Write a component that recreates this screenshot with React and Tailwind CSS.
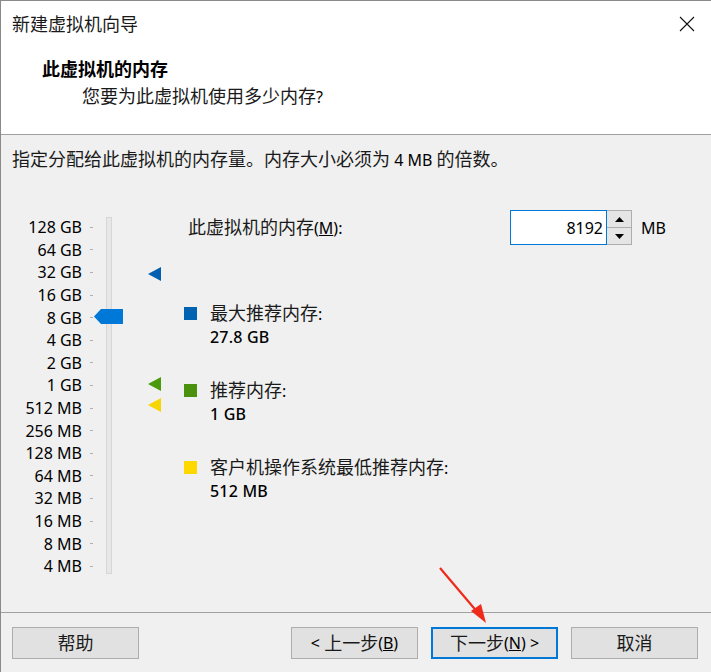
import React from 'react';

const font = { fontFamily: '"Noto Sans", "Noto Sans CJK SC", sans-serif' };

// CJK text runs a little wider than the latin text beside it
const C = ({ children, bold }) => (
  <span className={`text-[18px] text-[#1a1a1a] ${bold ? 'font-bold text-black' : ''}`}>{children}</span>
);

const scaleLabels = [
  '128 GB', '64 GB', '32 GB', '16 GB', '8 GB', '4 GB', '2 GB', '1 GB',
  '512 MB', '256 MB', '128 MB', '64 MB', '32 MB', '16 MB', '8 MB', '4 MB',
];

const Marker = ({ top, color }) => (
  <svg className="absolute left-[146px]" style={{ top }} width="15" height="15" viewBox="0 0 15 15">
    <polygon points="14,0 14,14 1,7" fill={color} />
  </svg>
);

const Legend = ({ color, label, value }) => (
  <div className="flex flex-col">
    <div className="flex items-center h-6 leading-6">
      <div className={`w-[13px] h-[13px] ${color}`} />
      <span className="ml-[13px]"><C>{label}</C>:</span>
    </div>
    <div className="h-6 leading-6 ml-[26px] font-medium tracking-[0.2px]">{value}</div>
  </div>
);

const Btn = ({ children, primary }) => (
  <button
    className={`w-[127px] h-[32px] bg-[#e1e1e1] text-[16px] leading-none text-black flex items-center justify-center ${
      primary ? 'border-2 border-[#0078d7]' : 'border border-[#adadad]'
    }`}
  >
    {children}
  </button>
);

export default function App() {
  return (
    <div className="relative w-[711px] h-[672px] bg-[#f0f0f0] border-l border-t border-[#8a8a8a] text-black text-[16px] overflow-hidden" style={font}>
      {/* title bar */}
      <div className="h-[46px] bg-white flex items-center justify-between pl-[11px] pr-[16px]">
        <C>新建虚拟机向导</C>
        <svg width="16" height="16" viewBox="0 0 16 16">
          <path d="M1 1 L15 15 M15 1 L1 15" stroke="#111" strokeWidth="1.1" />
        </svg>
      </div>

      {/* header */}
      <div className="h-[88px] bg-white border-b border-[#a0a0a0] pt-[10px]">
        <div className="pl-[41px] h-6 leading-6"><C bold>此虚拟机的内存</C></div>
        <div className="pl-[81px] mt-[3px] h-6 leading-6"><C>您要为此虚拟机使用多少内存</C>?</div>
      </div>

      {/* body */}
      <div className="h-[477px] pt-[12px]">
        <div className="pl-[11px] h-6 leading-6">
          <C>指定分配给此虚拟机的内存量。内存大小必须为</C> 4 MB <C>的倍数。</C>
        </div>

        <div className="flex mt-[43px]">
          {/* memory scale */}
          <div className="relative w-[183px] h-[365px]">
            <div className="flex flex-col pt-[2px]">
              {scaleLabels.map((l) => (
                <div key={l} className="flex items-center h-[22.6px]">
                  <span className="w-[81px] text-right text-[16px] leading-none">{l}</span>
                  <span className="ml-[8px] w-[3px] h-px bg-[#b0b0b0]" />
                </div>
              ))}
            </div>
            <div className="absolute left-[105px] top-[3px] w-[6px] h-[357px] bg-[#e7e7e7] border border-[#d6d6d6]" />
            <svg className="absolute left-[93px] top-[95px]" width="29" height="15" viewBox="0 0 29 15">
              <polygon points="7,0 29,0 29,15 7,15 0,7.5" fill="#0078d7" />
            </svg>
            <Marker top={53} color="#005fb0" />
            <Marker top={163} color="#4a9a0e" />
            <Marker top={184} color="#f7d500" />
          </div>

          {/* details */}
          <div className="flex flex-col">
            <div className="flex items-center h-[35px] -mt-[4px]">
              <span className="ml-[4px] w-[322px] leading-6">
                <C>此虚拟机的内存</C>(<span className="underline">M</span>):
              </span>
              <div className="w-[97px] h-[35px] bg-white border border-[#0078d7] flex items-center justify-end pr-[3px]">
                8192
              </div>
              <div className="w-[25px] h-[35px] flex flex-col border border-l-0 border-[#adadad] bg-[#e5e5e5]">
                <div className="flex-1 flex items-center justify-center border-b border-[#adadad]">
                  <svg width="9" height="5" viewBox="0 0 9 5"><polygon points="0,5 9,5 4.5,0" fill="#000" /></svg>
                </div>
                <div className="flex-1 flex items-center justify-center">
                  <svg width="9" height="5" viewBox="0 0 9 5"><polygon points="0,0 9,0 4.5,5" fill="#000" /></svg>
                </div>
              </div>
              <span className="ml-[9px]">MB</span>
            </div>

            <div className="flex flex-col gap-[29px] mt-[56px]">
              <Legend color="bg-[#0063b1]" label="最大推荐内存" value="27.8 GB" />
              <Legend color="bg-[#4a920e]" label="推荐内存" value="1 GB" />
              <Legend color="bg-[#ffd800]" label="客户机操作系统最低推荐内存" value="512 MB" />
            </div>
          </div>
        </div>
      </div>

      {/* footer */}
      <div className="border-t border-[#a0a0a0] pt-[14px] pl-[11px] pr-[13px] flex">
        <Btn><C>帮助</C></Btn>
        <div className="ml-auto flex gap-[13px]">
          <Btn>&lt;&nbsp;<C>上一步</C>(<span className="underline">B</span>)</Btn>
          <Btn primary><C>下一步</C>(<span className="underline">N</span>)&nbsp;&gt;</Btn>
          <Btn><C>取消</C></Btn>
        </div>
      </div>

      {/* red annotation arrow */}
      <svg className="absolute left-0 top-0 pointer-events-none" width="711" height="672">
        <line x1="439" y1="567" x2="478" y2="613" stroke="#f02a1a" strokeWidth="2.2" />
        <polygon points="485,622 470,610 480,603" fill="#f02a1a" />
      </svg>
    </div>
  );
}
